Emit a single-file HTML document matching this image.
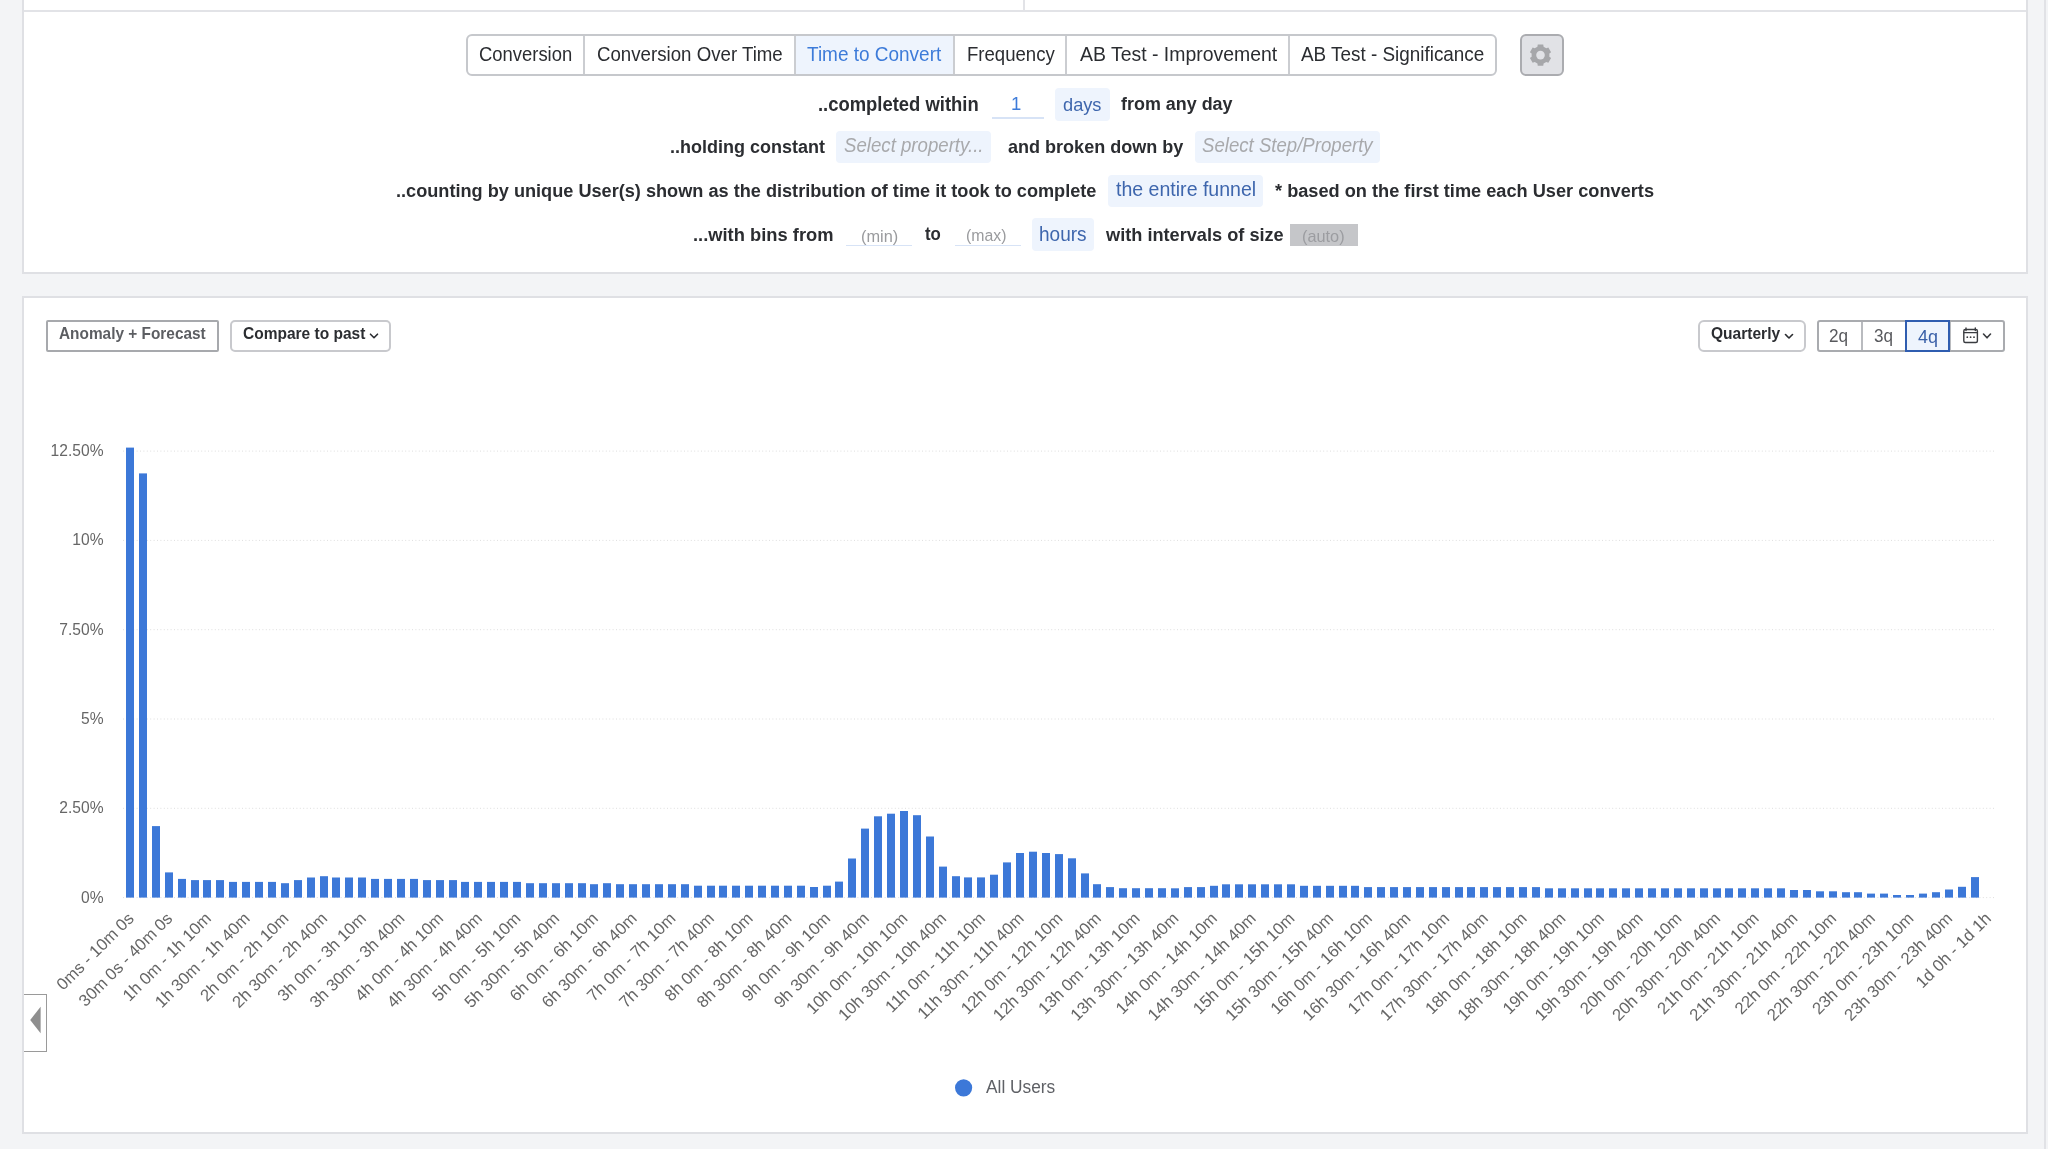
<!DOCTYPE html>
<html><head><meta charset="utf-8"><style>
html,body{margin:0;padding:0;}
body{width:2048px;height:1149px;background:#f3f4f6;position:relative;overflow:hidden;font-family:"Liberation Sans",sans-serif;}
.a{position:absolute;box-sizing:border-box;}
svg{will-change:transform;}
.t{position:absolute;white-space:pre;line-height:1;will-change:transform;font-family:"Liberation Sans",sans-serif;}
</style></head><body>
<!-- scrollbar-ish line at right -->
<div class="a" style="left:2044px;top:0;width:2px;height:1149px;background:#e1e2e6"></div>
<!-- card 1 -->
<div class="a" style="left:22px;top:-10px;width:2006px;height:284px;background:#fff;border:2px solid #dfe0e4"></div>
<div class="a" style="left:24px;top:10px;width:2002px;height:2px;background:#e2e3e7"></div>
<div class="a" style="left:1023px;top:0;width:2px;height:10px;background:#e2e3e7"></div>
<!-- tabs -->
<div class="a" style="left:466px;top:34px;width:1031px;height:42px;border:2px solid #c6c8cc;border-radius:6px;background:#fff"></div>
<div class="a" style="left:795px;top:36px;width:159px;height:38px;background:#eef4fd"></div>
<div class="a" style="left:583px;top:36px;width:2px;height:38px;background:#cbcdd1"></div>
<div class="a" style="left:794px;top:36px;width:2px;height:38px;background:#cbcdd1"></div>
<div class="a" style="left:953px;top:36px;width:2px;height:38px;background:#cbcdd1"></div>
<div class="a" style="left:1065px;top:36px;width:2px;height:38px;background:#cbcdd1"></div>
<div class="a" style="left:1288px;top:36px;width:2px;height:38px;background:#cbcdd1"></div>
<!-- gear button -->
<div class="a" style="left:1520px;top:34px;width:44px;height:42px;border:2px solid #abacb0;border-radius:6px;background:#e1e2e6"></div>
<svg class="a" style="left:0;top:0" width="2048" height="400"><g transform="translate(1540.5 55.1)" fill="#a6a7aa"><path d="M-3.08 -8.46 L-2.75 -10.65 L2.75 -10.65 L3.08 -8.46 L5.79 -6.89 L7.85 -7.71 L10.60 -2.94 L8.86 -1.56 L8.86 1.56 L10.60 2.94 L7.85 7.71 L5.79 6.89 L3.08 8.46 L2.75 10.65 L-2.75 10.65 L-3.08 8.46 L-5.79 6.89 L-7.85 7.71 L-10.60 2.94 L-8.86 1.56 L-8.86 -1.56 L-10.60 -2.94 L-7.85 -7.71 L-5.79 -6.89 Z"/><circle r="4.3" fill="#e1e2e6"/></g></svg>
<!-- inputs -->
<div class="a" style="left:992px;top:117px;width:52px;height:2px;background:#d7e3f6"></div>
<div class="t" style="left:1011px;top:94.6px;font-size:18.5px;color:#3d7bd9">1</div>
<div class="a" style="left:1055px;top:88px;width:55px;height:33px;background:#eef4fd;border-radius:4px"></div>
<div class="a" style="left:836px;top:131px;width:155px;height:32px;background:#eef4fd;border-radius:4px"></div>
<div class="a" style="left:1195px;top:131px;width:185px;height:32px;background:#eef4fd;border-radius:4px"></div>
<div class="a" style="left:1108px;top:175px;width:155px;height:32px;background:#eef4fd;border-radius:4px"></div>
<div class="a" style="left:846px;top:245px;width:66px;height:1px;background:#d7e3f6"></div>
<div class="a" style="left:955px;top:245px;width:66px;height:1px;background:#d7e3f6"></div>
<div class="a" style="left:1032px;top:218px;width:62px;height:33px;background:#eef4fd;border-radius:4px"></div>
<div class="a" style="left:1290px;top:224px;width:68px;height:22px;background:#c5c6c9"></div>
<!-- card 2 -->
<div class="a" style="left:22px;top:296px;width:2006px;height:838px;background:#fff;border:2px solid #dfe0e4"></div>
<div class="a" style="left:46px;top:320px;width:173px;height:32px;border:2px solid #a7a9ad;border-radius:2px;background:#fff"></div>
<div class="a" style="left:230px;top:320px;width:161px;height:32px;border:2px solid #c8c9cd;border-radius:5px;background:#fff"></div>
<div class="a" style="left:1698px;top:320px;width:108px;height:32px;border:2px solid #c8c9cd;border-radius:6px;background:#fff"></div>
<div class="a" style="left:1817px;top:320px;width:188px;height:32px;border:2px solid #a9abaf;border-radius:3px;background:#fff"></div>
<div class="a" style="left:1861px;top:322px;width:2px;height:28px;background:#b9bbbf"></div>
<div class="a" style="left:1905px;top:320px;width:45px;height:32px;border:2px solid #2f5db0;background:#eef4fd"></div>
<div class="a" style="left:1950px;top:322px;width:1px;height:28px;background:#b9bbbf"></div>
<svg class="a" style="left:0;top:0" width="2048" height="400" fill="none" stroke="#2b2d31" stroke-width="1.6" stroke-linecap="round" stroke-linejoin="round">
 <path d="M370.5 334.2 L374 337.7 L377.5 334.2"/>
 <path d="M1785.5 334.5 L1789 338 L1792.5 334.5"/>
 <path d="M1983.5 334 L1987 337.8 L1990.5 334" stroke="#3a3c40"/>
 <g stroke="#3a3c40" stroke-width="1.4"><rect x="1963.8" y="329.5" width="13.6" height="13" rx="1.5"/><line x1="1964" y1="332.6" x2="1977" y2="332.6" stroke-width="1.2"/><line x1="1966" y1="328" x2="1966" y2="330.5"/><line x1="1975.3" y1="328" x2="1975.3" y2="330.5"/></g>
 <g fill="#3a3c40" stroke="none"><circle cx="1967.3" cy="337.2" r="0.9"/><circle cx="1970.6" cy="337.2" r="0.9"/><circle cx="1974" cy="337.2" r="0.9"/></g>
</svg>
<!-- left arrow box -->
<div class="a" style="left:24px;top:994px;width:23px;height:58px;border:1.5px solid #9a9a9a;border-left:none;background:#fff"></div>
<svg class="a" style="left:0;top:0" width="60" height="1100"><path d="M30.2 1020 L40.6 1006.8 L40.6 1033.2 Z" fill="#8e8e8e"/></svg>
<!-- chart -->
<svg class="a" style="left:0;top:0" width="2048" height="1149">
 <g stroke="#dedede" stroke-width="1" stroke-dasharray="1 2.4"><line x1="123" y1="451.1" x2="1995" y2="451.1"/><line x1="123" y1="540.4" x2="1995" y2="540.4"/><line x1="123" y1="629.7" x2="1995" y2="629.7"/><line x1="123" y1="719.0" x2="1995" y2="719.0"/><line x1="123" y1="808.3" x2="1995" y2="808.3"/><line x1="123" y1="897.6" x2="1995" y2="897.6"/></g>
 <g fill="#3c78d8"><rect x="126" y="447.6" width="8" height="450.0"/><rect x="139" y="473.4" width="8" height="424.2"/><rect x="152" y="826.1" width="8" height="71.5"/><rect x="165" y="872.4" width="8" height="25.2"/><rect x="178" y="878.9" width="8" height="18.7"/><rect x="191" y="880.1" width="8" height="17.5"/><rect x="203" y="880.1" width="8" height="17.5"/><rect x="216" y="880.1" width="8" height="17.5"/><rect x="229" y="881.9" width="8" height="15.7"/><rect x="242" y="881.9" width="8" height="15.7"/><rect x="255" y="881.9" width="8" height="15.7"/><rect x="268" y="881.9" width="8" height="15.7"/><rect x="281" y="883.2" width="8" height="14.4"/><rect x="294" y="880.1" width="8" height="17.5"/><rect x="307" y="877.5" width="8" height="20.1"/><rect x="320" y="876.2" width="8" height="21.4"/><rect x="332" y="877.5" width="8" height="20.1"/><rect x="345" y="877.5" width="8" height="20.1"/><rect x="358" y="877.5" width="8" height="20.1"/><rect x="371" y="878.9" width="8" height="18.7"/><rect x="384" y="878.9" width="8" height="18.7"/><rect x="397" y="878.9" width="8" height="18.7"/><rect x="410" y="878.9" width="8" height="18.7"/><rect x="423" y="880.1" width="8" height="17.5"/><rect x="436" y="880.1" width="8" height="17.5"/><rect x="449" y="880.1" width="8" height="17.5"/><rect x="461" y="881.9" width="8" height="15.7"/><rect x="474" y="881.9" width="8" height="15.7"/><rect x="487" y="881.9" width="8" height="15.7"/><rect x="500" y="881.9" width="8" height="15.7"/><rect x="513" y="881.9" width="8" height="15.7"/><rect x="526" y="883.2" width="8" height="14.4"/><rect x="539" y="883.2" width="8" height="14.4"/><rect x="552" y="883.2" width="8" height="14.4"/><rect x="565" y="883.2" width="8" height="14.4"/><rect x="578" y="883.2" width="8" height="14.4"/><rect x="590" y="884.2" width="8" height="13.4"/><rect x="603" y="883.2" width="8" height="14.4"/><rect x="616" y="884.2" width="8" height="13.4"/><rect x="629" y="884.2" width="8" height="13.4"/><rect x="642" y="884.2" width="8" height="13.4"/><rect x="655" y="884.2" width="8" height="13.4"/><rect x="668" y="884.2" width="8" height="13.4"/><rect x="681" y="884.2" width="8" height="13.4"/><rect x="694" y="885.7" width="8" height="11.9"/><rect x="707" y="885.7" width="8" height="11.9"/><rect x="719" y="885.7" width="8" height="11.9"/><rect x="732" y="885.7" width="8" height="11.9"/><rect x="745" y="885.7" width="8" height="11.9"/><rect x="758" y="885.7" width="8" height="11.9"/><rect x="771" y="885.7" width="8" height="11.9"/><rect x="784" y="885.7" width="8" height="11.9"/><rect x="797" y="885.7" width="8" height="11.9"/><rect x="810" y="887.0" width="8" height="10.6"/><rect x="823" y="885.7" width="8" height="11.9"/><rect x="835" y="881.6" width="8" height="16.0"/><rect x="848" y="858.5" width="8" height="39.1"/><rect x="861" y="828.6" width="8" height="69.0"/><rect x="874" y="816.3" width="8" height="81.3"/><rect x="887" y="813.7" width="8" height="83.9"/><rect x="900" y="811.0" width="8" height="86.6"/><rect x="913" y="815.2" width="8" height="82.4"/><rect x="926" y="836.5" width="8" height="61.1"/><rect x="939" y="866.6" width="8" height="31.0"/><rect x="952" y="876.2" width="8" height="21.4"/><rect x="964" y="877.4" width="8" height="20.2"/><rect x="977" y="877.4" width="8" height="20.2"/><rect x="990" y="874.7" width="8" height="22.9"/><rect x="1003" y="862.4" width="8" height="35.2"/><rect x="1016" y="853.0" width="8" height="44.6"/><rect x="1029" y="851.7" width="8" height="45.9"/><rect x="1042" y="853.0" width="8" height="44.6"/><rect x="1055" y="854.1" width="8" height="43.5"/><rect x="1068" y="858.3" width="8" height="39.3"/><rect x="1081" y="873.4" width="8" height="24.2"/><rect x="1093" y="884.2" width="8" height="13.4"/><rect x="1106" y="887.1" width="8" height="10.5"/><rect x="1119" y="888.2" width="8" height="9.4"/><rect x="1132" y="888.2" width="8" height="9.4"/><rect x="1145" y="888.2" width="8" height="9.4"/><rect x="1158" y="888.2" width="8" height="9.4"/><rect x="1171" y="888.3" width="8" height="9.3"/><rect x="1184" y="887.1" width="8" height="10.5"/><rect x="1197" y="887.1" width="8" height="10.5"/><rect x="1210" y="885.8" width="8" height="11.8"/><rect x="1222" y="884.3" width="8" height="13.3"/><rect x="1235" y="884.3" width="8" height="13.3"/><rect x="1248" y="884.3" width="8" height="13.3"/><rect x="1261" y="884.3" width="8" height="13.3"/><rect x="1274" y="884.3" width="8" height="13.3"/><rect x="1287" y="884.3" width="8" height="13.3"/><rect x="1300" y="885.8" width="8" height="11.8"/><rect x="1313" y="885.8" width="8" height="11.8"/><rect x="1326" y="885.8" width="8" height="11.8"/><rect x="1339" y="885.8" width="8" height="11.8"/><rect x="1351" y="885.8" width="8" height="11.8"/><rect x="1364" y="887.1" width="8" height="10.5"/><rect x="1377" y="887.1" width="8" height="10.5"/><rect x="1390" y="887.1" width="8" height="10.5"/><rect x="1403" y="887.1" width="8" height="10.5"/><rect x="1416" y="887.1" width="8" height="10.5"/><rect x="1429" y="887.1" width="8" height="10.5"/><rect x="1442" y="887.1" width="8" height="10.5"/><rect x="1455" y="887.1" width="8" height="10.5"/><rect x="1467" y="887.1" width="8" height="10.5"/><rect x="1480" y="887.1" width="8" height="10.5"/><rect x="1493" y="887.1" width="8" height="10.5"/><rect x="1506" y="887.1" width="8" height="10.5"/><rect x="1519" y="887.1" width="8" height="10.5"/><rect x="1532" y="887.1" width="8" height="10.5"/><rect x="1545" y="888.3" width="8" height="9.3"/><rect x="1558" y="888.3" width="8" height="9.3"/><rect x="1571" y="888.3" width="8" height="9.3"/><rect x="1584" y="888.3" width="8" height="9.3"/><rect x="1596" y="888.3" width="8" height="9.3"/><rect x="1609" y="888.3" width="8" height="9.3"/><rect x="1622" y="888.3" width="8" height="9.3"/><rect x="1635" y="888.3" width="8" height="9.3"/><rect x="1648" y="888.3" width="8" height="9.3"/><rect x="1661" y="888.3" width="8" height="9.3"/><rect x="1674" y="888.3" width="8" height="9.3"/><rect x="1687" y="888.3" width="8" height="9.3"/><rect x="1700" y="888.3" width="8" height="9.3"/><rect x="1713" y="888.3" width="8" height="9.3"/><rect x="1725" y="888.3" width="8" height="9.3"/><rect x="1738" y="888.3" width="8" height="9.3"/><rect x="1751" y="888.3" width="8" height="9.3"/><rect x="1764" y="888.3" width="8" height="9.3"/><rect x="1777" y="888.3" width="8" height="9.3"/><rect x="1790" y="890.0" width="8" height="7.6"/><rect x="1803" y="890.0" width="8" height="7.6"/><rect x="1816" y="891.3" width="8" height="6.3"/><rect x="1829" y="891.3" width="8" height="6.3"/><rect x="1842" y="892.2" width="8" height="5.4"/><rect x="1854" y="892.2" width="8" height="5.4"/><rect x="1867" y="893.6" width="8" height="4.0"/><rect x="1880" y="893.6" width="8" height="4.0"/><rect x="1893" y="895.0" width="8" height="2.6"/><rect x="1906" y="895.0" width="8" height="2.6"/><rect x="1919" y="893.6" width="8" height="4.0"/><rect x="1932" y="892.2" width="8" height="5.4"/><rect x="1945" y="889.5" width="8" height="8.1"/><rect x="1958" y="886.8" width="8" height="10.8"/><rect x="1971" y="877.1" width="8" height="20.5"/></g>
 <g fill="#666666" font-family="Liberation Sans" font-size="15.6"><text x="103.5" y="456.1" text-anchor="end">12.50%</text><text x="103.5" y="545.4" text-anchor="end">10%</text><text x="103.5" y="634.7" text-anchor="end">7.50%</text><text x="103.5" y="724.0" text-anchor="end">5%</text><text x="103.5" y="813.3" text-anchor="end">2.50%</text><text x="103.5" y="902.6" text-anchor="end">0%</text></g>
 <g fill="#666666" font-family="Liberation Sans" font-size="16.7"><text x="134.8" y="919.5" text-anchor="end" transform="rotate(-45 134.8 919.5)">0ms - 10m 0s</text><text x="173.5" y="919.5" text-anchor="end" transform="rotate(-45 173.5 919.5)">30m 0s - 40m 0s</text><text x="212.2" y="919.5" text-anchor="end" transform="rotate(-45 212.2 919.5)">1h 0m - 1h 10m</text><text x="250.9" y="919.5" text-anchor="end" transform="rotate(-45 250.9 919.5)">1h 30m - 1h 40m</text><text x="289.6" y="919.5" text-anchor="end" transform="rotate(-45 289.6 919.5)">2h 0m - 2h 10m</text><text x="328.3" y="919.5" text-anchor="end" transform="rotate(-45 328.3 919.5)">2h 30m - 2h 40m</text><text x="367.0" y="919.5" text-anchor="end" transform="rotate(-45 367.0 919.5)">3h 0m - 3h 10m</text><text x="405.7" y="919.5" text-anchor="end" transform="rotate(-45 405.7 919.5)">3h 30m - 3h 40m</text><text x="444.4" y="919.5" text-anchor="end" transform="rotate(-45 444.4 919.5)">4h 0m - 4h 10m</text><text x="483.0" y="919.5" text-anchor="end" transform="rotate(-45 483.0 919.5)">4h 30m - 4h 40m</text><text x="521.7" y="919.5" text-anchor="end" transform="rotate(-45 521.7 919.5)">5h 0m - 5h 10m</text><text x="560.4" y="919.5" text-anchor="end" transform="rotate(-45 560.4 919.5)">5h 30m - 5h 40m</text><text x="599.1" y="919.5" text-anchor="end" transform="rotate(-45 599.1 919.5)">6h 0m - 6h 10m</text><text x="637.8" y="919.5" text-anchor="end" transform="rotate(-45 637.8 919.5)">6h 30m - 6h 40m</text><text x="676.5" y="919.5" text-anchor="end" transform="rotate(-45 676.5 919.5)">7h 0m - 7h 10m</text><text x="715.2" y="919.5" text-anchor="end" transform="rotate(-45 715.2 919.5)">7h 30m - 7h 40m</text><text x="753.9" y="919.5" text-anchor="end" transform="rotate(-45 753.9 919.5)">8h 0m - 8h 10m</text><text x="792.6" y="919.5" text-anchor="end" transform="rotate(-45 792.6 919.5)">8h 30m - 8h 40m</text><text x="831.3" y="919.5" text-anchor="end" transform="rotate(-45 831.3 919.5)">9h 0m - 9h 10m</text><text x="870.0" y="919.5" text-anchor="end" transform="rotate(-45 870.0 919.5)">9h 30m - 9h 40m</text><text x="908.7" y="919.5" text-anchor="end" transform="rotate(-45 908.7 919.5)">10h 0m - 10h 10m</text><text x="947.4" y="919.5" text-anchor="end" transform="rotate(-45 947.4 919.5)">10h 30m - 10h 40m</text><text x="986.1" y="919.5" text-anchor="end" transform="rotate(-45 986.1 919.5)">11h 0m - 11h 10m</text><text x="1024.8" y="919.5" text-anchor="end" transform="rotate(-45 1024.8 919.5)">11h 30m - 11h 40m</text><text x="1063.5" y="919.5" text-anchor="end" transform="rotate(-45 1063.5 919.5)">12h 0m - 12h 10m</text><text x="1102.2" y="919.5" text-anchor="end" transform="rotate(-45 1102.2 919.5)">12h 30m - 12h 40m</text><text x="1140.8" y="919.5" text-anchor="end" transform="rotate(-45 1140.8 919.5)">13h 0m - 13h 10m</text><text x="1179.5" y="919.5" text-anchor="end" transform="rotate(-45 1179.5 919.5)">13h 30m - 13h 40m</text><text x="1218.2" y="919.5" text-anchor="end" transform="rotate(-45 1218.2 919.5)">14h 0m - 14h 10m</text><text x="1256.9" y="919.5" text-anchor="end" transform="rotate(-45 1256.9 919.5)">14h 30m - 14h 40m</text><text x="1295.6" y="919.5" text-anchor="end" transform="rotate(-45 1295.6 919.5)">15h 0m - 15h 10m</text><text x="1334.3" y="919.5" text-anchor="end" transform="rotate(-45 1334.3 919.5)">15h 30m - 15h 40m</text><text x="1373.0" y="919.5" text-anchor="end" transform="rotate(-45 1373.0 919.5)">16h 0m - 16h 10m</text><text x="1411.7" y="919.5" text-anchor="end" transform="rotate(-45 1411.7 919.5)">16h 30m - 16h 40m</text><text x="1450.4" y="919.5" text-anchor="end" transform="rotate(-45 1450.4 919.5)">17h 0m - 17h 10m</text><text x="1489.1" y="919.5" text-anchor="end" transform="rotate(-45 1489.1 919.5)">17h 30m - 17h 40m</text><text x="1527.8" y="919.5" text-anchor="end" transform="rotate(-45 1527.8 919.5)">18h 0m - 18h 10m</text><text x="1566.5" y="919.5" text-anchor="end" transform="rotate(-45 1566.5 919.5)">18h 30m - 18h 40m</text><text x="1605.2" y="919.5" text-anchor="end" transform="rotate(-45 1605.2 919.5)">19h 0m - 19h 10m</text><text x="1643.9" y="919.5" text-anchor="end" transform="rotate(-45 1643.9 919.5)">19h 30m - 19h 40m</text><text x="1682.6" y="919.5" text-anchor="end" transform="rotate(-45 1682.6 919.5)">20h 0m - 20h 10m</text><text x="1721.3" y="919.5" text-anchor="end" transform="rotate(-45 1721.3 919.5)">20h 30m - 20h 40m</text><text x="1759.9" y="919.5" text-anchor="end" transform="rotate(-45 1759.9 919.5)">21h 0m - 21h 10m</text><text x="1798.6" y="919.5" text-anchor="end" transform="rotate(-45 1798.6 919.5)">21h 30m - 21h 40m</text><text x="1837.3" y="919.5" text-anchor="end" transform="rotate(-45 1837.3 919.5)">22h 0m - 22h 10m</text><text x="1876.0" y="919.5" text-anchor="end" transform="rotate(-45 1876.0 919.5)">22h 30m - 22h 40m</text><text x="1914.7" y="919.5" text-anchor="end" transform="rotate(-45 1914.7 919.5)">23h 0m - 23h 10m</text><text x="1953.4" y="919.5" text-anchor="end" transform="rotate(-45 1953.4 919.5)">23h 30m - 23h 40m</text><text x="1992.1" y="919.5" text-anchor="end" transform="rotate(-45 1992.1 919.5)">1d 0h - 1d 1h</text></g>
 <circle cx="963.6" cy="1087.8" r="8.6" fill="#3c78d8"/>
</svg>
<div class="t" style="left:478.7px;top:45.9px;font-size:18.43px;font-weight:400;font-style:normal;color:#2b2d31;transform-origin:0 15.6px;transform:scaleY(1.05)">Conversion</div>
<div class="t" style="left:597.0px;top:45.7px;font-size:18.68px;font-weight:400;font-style:normal;color:#2b2d31;transform-origin:0 15.8px;transform:scaleY(1.05)">Conversion Over Time</div>
<div class="t" style="left:807.2px;top:45.4px;font-size:18.98px;font-weight:400;font-style:normal;color:#3d7bd9;transform-origin:0 16.1px;transform:scaleY(1.05)">Time to Convert</div>
<div class="t" style="left:966.7px;top:45.8px;font-size:18.58px;font-weight:400;font-style:normal;color:#2b2d31;transform-origin:0 15.7px;transform:scaleY(1.05)">Frequency</div>
<div class="t" style="left:1079.8px;top:45.0px;font-size:19.43px;font-weight:400;font-style:normal;color:#2b2d31;transform-origin:0 16.5px;transform:scaleY(1.05)">AB Test - Improvement</div>
<div class="t" style="left:1301.2px;top:45.5px;font-size:18.89px;font-weight:400;font-style:normal;color:#2b2d31;transform-origin:0 16.0px;transform:scaleY(1.05)">AB Test - Significance</div>
<div class="t" style="left:817.6px;top:95.7px;font-size:18.43px;font-weight:700;font-style:normal;color:#2b2d31;transform-origin:0 15.6px;transform:scaleY(1.05)">..completed within</div>
<div class="t" style="left:1063.0px;top:95.9px;font-size:18.23px;font-weight:400;font-style:normal;color:#3e66ad;transform-origin:0 15.4px;transform:scaleY(1.05)">days</div>
<div class="t" style="left:1121.3px;top:96.1px;font-size:17.93px;font-weight:700;font-style:normal;color:#2b2d31;transform-origin:0 15.2px;transform:scaleY(1.05)">from any day</div>
<div class="t" style="left:670.2px;top:137.9px;font-size:18.00px;font-weight:700;font-style:normal;color:#2b2d31;transform-origin:0 15.2px;transform:scaleY(1.05)">..holding constant</div>
<div class="t" style="left:843.7px;top:137.3px;font-size:18.65px;font-weight:400;font-style:italic;color:#a8a9ac;transform-origin:0 15.8px;transform:scaleY(1.05)">Select property...</div>
<div class="t" style="left:1008.2px;top:137.8px;font-size:18.04px;font-weight:700;font-style:normal;color:#2b2d31;transform-origin:0 15.3px;transform:scaleY(1.05)">and broken down by</div>
<div class="t" style="left:1202.1px;top:137.3px;font-size:18.63px;font-weight:400;font-style:italic;color:#a8a9ac;transform-origin:0 15.8px;transform:scaleY(1.05)">Select Step/Property</div>
<div class="t" style="left:395.7px;top:181.5px;font-size:18.15px;font-weight:700;font-style:normal;color:#2b2d31;transform-origin:0 15.4px;transform:scaleY(1.05)">..counting by unique User(s) shown as the distribution of time it took to complete</div>
<div class="t" style="left:1115.7px;top:180.3px;font-size:19.56px;font-weight:400;font-style:normal;color:#3e66ad;transform-origin:0 16.6px;transform:scaleY(1.05)">the entire funnel</div>
<div class="t" style="left:1275.4px;top:181.5px;font-size:18.19px;font-weight:700;font-style:normal;color:#2b2d31;transform-origin:0 15.4px;transform:scaleY(1.05)">* based on the first time each User converts</div>
<div class="t" style="left:693.3px;top:226.0px;font-size:18.33px;font-weight:700;font-style:normal;color:#2b2d31;transform-origin:0 15.5px;transform:scaleY(1.05)">...with bins from</div>
<div class="t" style="left:860.5px;top:227.6px;font-size:16.38px;font-weight:400;font-style:normal;color:#9a9b9e;transform-origin:0 13.9px;transform:scaleY(1.05)">(min)</div>
<div class="t" style="left:925.0px;top:227.2px;font-size:16.84px;font-weight:700;font-style:normal;color:#2b2d31;transform-origin:0 14.3px;transform:scaleY(1.05)">to</div>
<div class="t" style="left:966.0px;top:228.1px;font-size:15.85px;font-weight:400;font-style:normal;color:#9a9b9e;transform-origin:0 13.4px;transform:scaleY(1.05)">(max)</div>
<div class="t" style="left:1038.9px;top:225.4px;font-size:19.03px;font-weight:400;font-style:normal;color:#3e66ad;transform-origin:0 16.1px;transform:scaleY(1.05)">hours</div>
<div class="t" style="left:1105.7px;top:226.1px;font-size:18.18px;font-weight:700;font-style:normal;color:#2b2d31;transform-origin:0 15.4px;transform:scaleY(1.05)">with intervals of size</div>
<div class="t" style="left:1302.0px;top:227.7px;font-size:16.31px;font-weight:400;font-style:normal;color:#9c9da1;transform-origin:0 13.8px;transform:scaleY(1.05)">(auto)</div>
<div class="t" style="left:59.3px;top:326.1px;font-size:15.40px;font-weight:700;font-style:normal;color:#5c5e62;transform-origin:0 13.0px;transform:scaleY(1.05)">Anomaly + Forecast</div>
<div class="t" style="left:242.8px;top:326.0px;font-size:15.51px;font-weight:700;font-style:normal;color:#2b2d31;transform-origin:0 13.1px;transform:scaleY(1.05)">Compare to past</div>
<div class="t" style="left:1710.5px;top:325.9px;font-size:15.56px;font-weight:700;font-style:normal;color:#2b2d31;transform-origin:0 13.2px;transform:scaleY(1.05)">Quarterly</div>
<div class="t" style="left:1829.4px;top:328.2px;font-size:17.17px;font-weight:400;font-style:normal;color:#58595d;transform-origin:0 14.5px;transform:scaleY(1.05)">2q</div>
<div class="t" style="left:1874.0px;top:328.2px;font-size:17.08px;font-weight:400;font-style:normal;color:#58595d;transform-origin:0 14.5px;transform:scaleY(1.05)">3q</div>
<div class="t" style="left:1918.0px;top:327.5px;font-size:17.98px;font-weight:400;font-style:normal;color:#3a60a8;transform-origin:0 15.2px;transform:scaleY(1.05)">4q</div>
<div class="t" style="left:986.0px;top:1079.3px;font-size:17.32px;font-weight:400;font-style:normal;color:#5f6166;transform-origin:0 14.7px;transform:scaleY(1.05)">All Users</div>
</body></html>
